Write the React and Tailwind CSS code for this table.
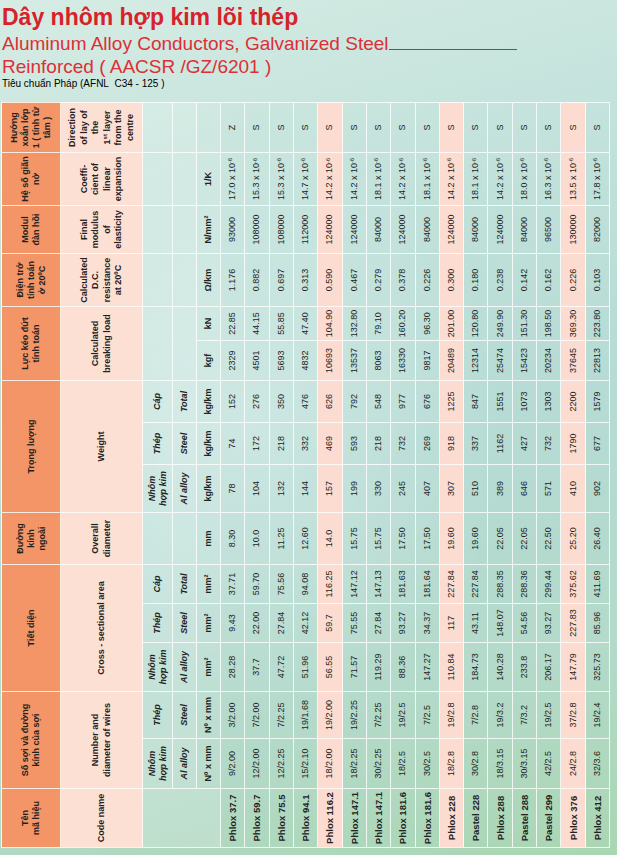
import React from "react";

const GROUPS = [
  { span: "col-span-1", vi: <>Tên<br />mã hiệu</>, en: "Code name" },
  { span: "col-span-2", vi: <>Số sợi và đường<br />kính của sợi</>, en: <>Number and<br />diameter of wires</> },
  { span: "col-span-3", vi: "Tiết diện", en: "Cross - sectional area" },
  { span: "col-span-1", vi: <>Đường<br />kính<br />ngoài</>, en: <>Overall<br />diameter</> },
  { span: "col-span-3", vi: "Trọng lượng", en: "Weight" },
  { span: "col-span-2", vi: <>Lực kéo đứt<br />tính toán</>, en: <>Calculated<br />breaking load</> },
  { span: "col-span-1", vi: <>Điện trở<br />tính toán<br />ở 20ºC</>, en: <>Calculated<br />D.C.<br />resistance<br />at 20ºC</> },
  { span: "col-span-1", vi: <>Modul<br />đàn hồi</>, en: <>Final<br />modulus<br />of<br />elasticity</> },
  { span: "col-span-1", vi: <>Hệ số giãn<br />nở</>, en: <>Coeffi-<br />cient of<br />linear<br />expansion</> },
  {
    span: "col-span-1",
    vi: <>Hướng<br />xoắn lớp<br />1 ( tính từ<br />tâm )</>,
    en: <>Direction<br />of lay of<br />the<br />1<sup className="text-[6px]">st</sup> layer<br />from the<br />centre</>,
  },
];

const AL = <>Nhôm<br />hợp kim</>;

// sub header rows (row 3 and 4), empty cells where the group has no split
const SUB_VI = [
  { t: null, cls: "row-span-3" },
  { t: AL }, { t: "Thép" },
  { t: AL }, { t: "Thép" }, { t: "Cáp" },
  { t: null },
  { t: AL }, { t: "Thép" }, { t: "Cáp" },
  { t: null, cls: "col-span-2" },
  { t: null }, { t: null }, { t: null }, { t: null },
];

const SUB_EN = [
  { t: "Al alloy" }, { t: "Steel" },
  { t: "Al alloy" }, { t: "Steel" }, { t: "Total" },
  { t: null },
  { t: "Al alloy" }, { t: "Steel" }, { t: "Total" },
  { t: null, cls: "col-span-2" },
  { t: null }, { t: null }, { t: null }, { t: null },
];

const UNITS = ["Nº x mm", "Nº x mm", "mm²", "mm²", "mm²", "mm", "kg/km", "kg/km", "kg/km", "kgf", "kN", "Ω/km", "N/mm²", "1/K", ""];

const ROWS = [
  ["Phlox 37.7", "9/2.00", "3/2.00", "28.28", "9.43", "37.71", "8.30", "78", "74", "152", "2329", "22.85", "1.176", "93000", "17.0", "Z"],
  ["Phlox 59.7", "12/2.00", "7/2.00", "37.7", "22.00", "59.70", "10.0", "104", "172", "276", "4501", "44.15", "0.882", "108000", "15.3", "S"],
  ["Phlox 75.5", "12/2.25", "7/2.25", "47.72", "27.84", "75.56", "11.25", "132", "218", "350", "5693", "55.85", "0.697", "108000", "15.3", "S"],
  ["Phlox 94.1", "15/2.10", "19/1.68", "51.96", "42.12", "94.08", "12.60", "144", "332", "476", "4832", "47.40", "0.313", "112000", "14.7", "S"],
  ["Phlox 116.2", "18/2.00", "19/2.00", "56.55", "59.7", "116.25", "14.0", "157", "469", "626", "10693", "104.90", "0.590", "124000", "14.2", "S"],
  ["Phlox 147.1", "18/2.25", "19/2.25", "71.57", "75.55", "147.12", "15.75", "199", "593", "792", "13537", "132.80", "0.467", "124000", "14.2", "S"],
  ["Phlox 147.1", "30/2.25", "7/2.25", "119.29", "27.84", "147.13", "15.75", "330", "218", "548", "8063", "79.10", "0.279", "84000", "18.1", "S"],
  ["Phlox 181.6", "18/2.5", "19/2.5", "88.36", "93.27", "181.63", "17.50", "245", "732", "977", "16330", "160.20", "0.378", "124000", "14.2", "S"],
  ["Phlox 181.6", "30/2.5", "7/2.5", "147.27", "34.37", "181.64", "17.50", "407", "269", "676", "9817", "96.30", "0.226", "84000", "18.1", "S"],
  ["Phlox 228", "18/2.8", "19/2.8", "110.84", "117", "227.84", "19.60", "307", "918", "1225", "20489", "201.00", "0.300", "124000", "14.2", "S"],
  ["Pastel 228", "30/2.8", "7/2.8", "184.73", "43.11", "227.84", "19.60", "510", "337", "847", "12314", "120.80", "0.180", "84000", "18.1", "S"],
  ["Phlox 288", "18/3.15", "19/3.2", "140.28", "148.07", "288.35", "22.05", "389", "1162", "1551", "25474", "249.90", "0.238", "124000", "14.2", "S"],
  ["Pastel 288", "30/3.15", "7/3.2", "233.8", "54.56", "288.36", "22.05", "646", "427", "1073", "15423", "151.30", "0.142", "84000", "18.0", "S"],
  ["Pastel 299", "42/2.5", "19/2.5", "206.17", "93.27", "299.44", "22.50", "571", "732", "1303", "20234", "198.50", "0.162", "96500", "16.3", "S"],
  ["Phlox 376", "24/2.8", "37/2.8", "147.79", "227.83", "375.62", "25.20", "410", "1790", "2200", "37645", "369.30", "0.226", "130000", "13.5", "S"],
  ["Phlox 412", "32/3.6", "19/2.4", "325.73", "85.96", "411.69", "26.40", "902", "677", "1579", "22813", "223.80", "0.103", "82000", "17.8", "S"],
];

const PINK = [4, 9, 14];

function Cell({ className = "", children }) {
  return (
    <div className={"flex items-center justify-center text-center border-r border-b border-white/80 " + className}>
      <span className="whitespace-nowrap">{children}</span>
    </div>
  );
}

export default function App() {
  return (
    <div className="w-[617px] h-[855px] overflow-hidden bg-[radial-gradient(ellipse_at_40%_50%,rgba(255,255,255,0.3),transparent_50%),linear-gradient(165deg,#d6ece4_0%,#c2e2db_28%,#b5dbd4_55%,#b4dacb_78%,#aad6b2_100%)] font-['Liberation_Sans',Arial,sans-serif] text-[#222]">
      <div className="h-[102px] pl-[2px] pt-[2px]">
        <h1 className="text-[23px] leading-[30px] font-bold text-[#d7222c]">Dây nhôm hợp kim lõi thép</h1>
        <p className="text-[19px] leading-[24px] text-[#dc2f36]">
          Aluminum Alloy Conductors, Galvanized Steel
          <span className="inline-block w-[128px] border-b border-[#d8262f] align-baseline" />
        </p>
        <p className="text-[19px] leading-[22px] text-[#dc2f36]">Reinforced ( AACSR /GZ/6201 )</p>
        <p className="text-[10px] leading-[12px] text-black">Tiêu chuẩn Pháp (AFNL&nbsp; C34 - 125 )</p>
      </div>

      <div className="w-[617px] h-[746px] overflow-hidden">
        {/* the table is laid out upright and turned a quarter counter-clockwise */}
        <div className="grid w-[746px] h-[609px] origin-top-left -rotate-90 translate-x-[1px] translate-y-[746px] border-l border-t border-white/80 grid-cols-[59px_50px_47px_49px_39px_39px_52px_48px_42px_42px_40px_34px_53px_48px_53px_50px] grid-rows-[59px_82px_30px_24px_24px_repeat(16,minmax(0,1fr))] text-[9px] leading-[11px]">
          {GROUPS.map((g, i) => (
            <Cell key={"vi" + i} className={g.span + " bg-[#f39566] font-semibold"}>{g.vi}</Cell>
          ))}
          {GROUPS.map((g, i) => (
            <Cell key={"en" + i} className={g.span + " bg-[#fde0d4] font-bold leading-[11.5px]"}>{g.en}</Cell>
          ))}
          {SUB_VI.map((s, i) => (
            <Cell key={"sv" + i} className={(s.cls || "") + " bg-white/20 italic font-semibold"}>{s.t}</Cell>
          ))}
          {SUB_EN.map((s, i) => (
            <Cell key={"se" + i} className={(s.cls || "") + " bg-white/20 italic font-semibold"}>{s.t}</Cell>
          ))}
          {UNITS.map((u, i) => (
            <Cell key={"u" + i} className="bg-white/10 font-semibold">{u}</Cell>
          ))}
          {ROWS.map((row, r) =>
            row.map((v, c) => {
              const pink = PINK.includes(r) ? " bg-[#fcdcd0]" : "";
              if (c === 0) {
                return (
                  <Cell key={r + "-" + c} className={"font-bold text-[9.5px]" + pink}>{v}</Cell>
                );
              }
              if (c === 14) {
                return (
                  <Cell key={r + "-" + c} className={pink}>
                    {v} x 10<sup className="text-[5.5px]">-6</sup>
                  </Cell>
                );
              }
              return (
                <Cell key={r + "-" + c} className={pink}>{v}</Cell>
              );
            })
          )}
        </div>
      </div>
    </div>
  );
}
